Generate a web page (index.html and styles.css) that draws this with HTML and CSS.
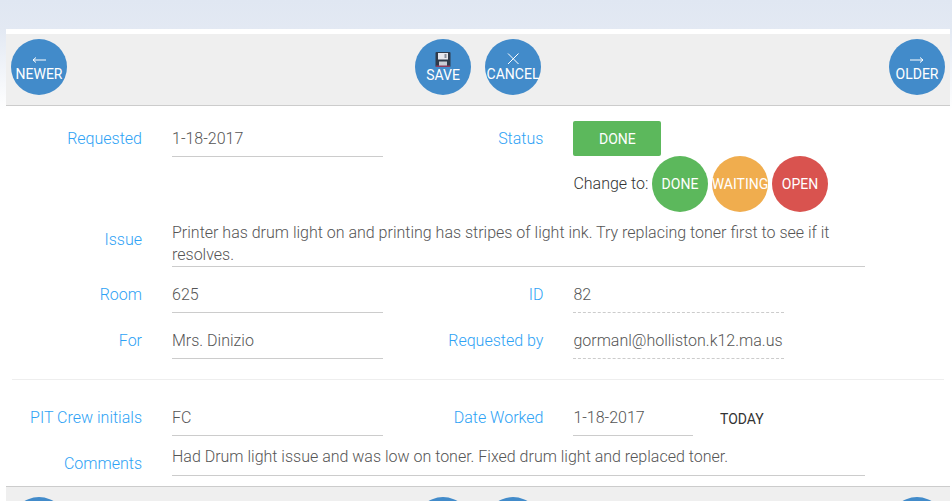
FILE: index.html
```html
<!DOCTYPE html>
<html lang="en">
<head>
  <meta charset="UTF-8" />
  <title>Work Order</title>
  <link rel="stylesheet" href="styles.css">
</head>
<body>
  <main class="card">

    <!-- Top navigation -->
    <nav class="toolbar">
      <a class="circle nav">
        <svg class="icon" width="16" height="14" viewBox="0 0 16 14">
          <path d="M15 8H2M5 5.5 2 8l3 2.5" fill="none" stroke="#fff" stroke-width="1" />
        </svg>NEWER
      </a>
      <div class="group">
        <a class="circle nav">
          <svg class="icon" width="16" height="15" viewBox="0 0 16 15">
            <rect x="0.5" y="0" width="15" height="15" rx="1" fill="#2f3a4a" />
            <rect x="3" y="1" width="10" height="6.5" fill="#e8e8ee" />
            <rect x="4" y="9.5" width="8" height="5.5" fill="#c9ccd4" />
            <rect x="9.5" y="2" width="2" height="4" fill="#8a8f9c" />
            <rect x="1" y="13.5" width="14" height="1.5" fill="#8e3a5c" />
          </svg>SAVE
        </a>
        <a class="circle nav">
          <svg class="icon" width="12" height="14" viewBox="0 0 12 14">
            <path d="M1 1.5 11.5 12M11.5 1.5 1 12" fill="none" stroke="#fff" stroke-width="1" />
          </svg>CANCEL
        </a>
      </div>
      <a class="circle nav">
        <svg class="icon" width="16" height="14" viewBox="0 0 16 14">
          <path d="M1 8h13M11 5.5 14 8l-3 2.5" fill="none" stroke="#fff" stroke-width="1" />
        </svg>OLDER
      </a>
    </nav>

    <form class="form">
      <div class="row first">
        <label class="label">Requested</label>
        <div class="value">1-18-2017</div>
        <label class="label right">Status</label>
        <div class="status">
          <button type="button" class="status-btn">DONE</button>
          <div class="change">
            <span class="change-text">Change to:</span>
            <a class="circle green">DONE</a>
            <a class="circle orange">WAITING</a>
            <a class="circle red">OPEN</a>
          </div>
        </div>
      </div>

      <div class="row">
        <label class="label">Issue</label>
        <div class="text-area">Printer has drum light on and printing has stripes of light ink. Try replacing toner first to see if it resolves.</div>
      </div>

      <div class="row">
        <label class="label">Room</label>
        <div class="value">625</div>
        <label class="label right">ID</label>
        <div class="value dashed">82</div>
      </div>

      <div class="row">
        <label class="label">For</label>
        <div class="value">Mrs. Dinizio</div>
        <label class="label right">Requested by</label>
        <div class="value dashed">gormanl@holliston.k12.ma.us</div>
      </div>

      <hr class="divider" />

      <div class="row">
        <label class="label">PIT Crew initials</label>
        <div class="value">FC</div>
        <label class="label right">Date Worked</label>
        <div class="value short">1-18-2017</div>
        <a class="today">TODAY</a>
      </div>

      <div class="row">
        <label class="label">Comments</label>
        <div class="text-area single">Had Drum light issue and was low on toner. Fixed drum light and replaced toner.</div>
      </div>
    </form>

    <!-- Bottom navigation, only the tops of the buttons are on screen -->
    <nav class="toolbar bottom">
      <a class="circle nav"></a>
      <div class="group">
        <a class="circle nav"></a>
        <a class="circle nav"></a>
      </div>
      <a class="circle nav"></a>
    </nav>

  </main>
</body>
</html>
```

FILE: styles.css
```css
html, body {
  height: 100%;
  overflow: hidden;
}
body {
  margin: 0;
  font-family: Roboto, "Liberation Sans", sans-serif;
  font-size: 16px;
  font-weight: 300;
  color: #555;
  background: linear-gradient(#e0e7f2 0, #e3e9f3 30px, #fff 110px);
}
.card {
  margin: 29px 2px 0 6px;
  padding-top: 5px;
  background: #fff;
}
.toolbar {
  display: flex;
  justify-content: space-between;
  padding: 5px 5px 10px;
  background: #efefef;
  border-bottom: 1px solid #ccc;
}
.toolbar.bottom {
  border-bottom: 0;
  border-top: 1px solid #ccc;
  padding-top: 10px;
}
.group {
  display: flex;
  gap: 14px;
}
.circle {
  display: flex;
  flex: none;
  flex-direction: column;
  align-items: center;
  justify-content: center;
  width: 56px;
  height: 56px;
  border-radius: 50%;
  color: #fff;
  font-size: 14px;
  font-weight: 400;
  line-height: 16px;
  white-space: nowrap;
}
.nav {
  box-sizing: border-box;
  justify-content: flex-start;
  padding-top: 13px;
  background: #428bca;
}
.icon {
  display: block;
  flex: none;
}
.green {
  background: #5cb85c;
}
.orange {
  background: #f0ad4e;
}
.red {
  background: #d9534f;
}
.form {
  padding-top: 15px;
}
.row {
  display: flex;
  align-items: flex-start;
  margin-bottom: 9px;
}
.label {
  flex: none;
  width: 136px;
  padding-top: 8px;
  line-height: 22px;
  text-align: right;
  color: #2ea2f5;
}
.label.right {
  width: 160.4px;
}
.value {
  flex: none;
  box-sizing: border-box;
  width: 211px;
  height: 37px;
  margin-left: 30px;
  padding: 8px 0 6px;
  line-height: 22px;
  border-bottom: 1px solid #ccc;
}
.value.dashed {
  border-bottom: 1px dashed #ccc;
}
.value.short {
  width: 120px;
}
.first .label {
  padding-top: 7px;
}
.first .value {
  height: 36px;
  padding-top: 7px;
}
.text-area {
  width: 693px;
  margin-left: 30px;
  padding-top: 1px;
  line-height: 22px;
  border-bottom: 1px solid #ccc;
}
.text-area.single {
  padding-bottom: 7px;
}
.status {
  margin-left: 30px;
}
.status-btn {
  display: block;
  width: 88px;
  height: 35px;
  padding: 0;
  border: 0;
  border-radius: 2px;
  background: #5cb85c;
  color: #fff;
  font: 400 14px Roboto, "Liberation Sans", sans-serif;
}
.change {
  display: flex;
  align-items: center;
  gap: 4px;
}
.change-text {
  width: 74.6px;
  padding-bottom: 2px;
  color: #333;
  white-space: nowrap;
}
.today {
  margin: 10px 0 0 26.6px;
  font-size: 14px;
  font-weight: 400;
  line-height: 20px;
  color: #333;
}
.divider {
  height: 1px;
  margin: 20px 6px 19px;
  border: 0;
  background: #eee;
}
.form .row:last-child {
  margin-bottom: 10px;
}
```
